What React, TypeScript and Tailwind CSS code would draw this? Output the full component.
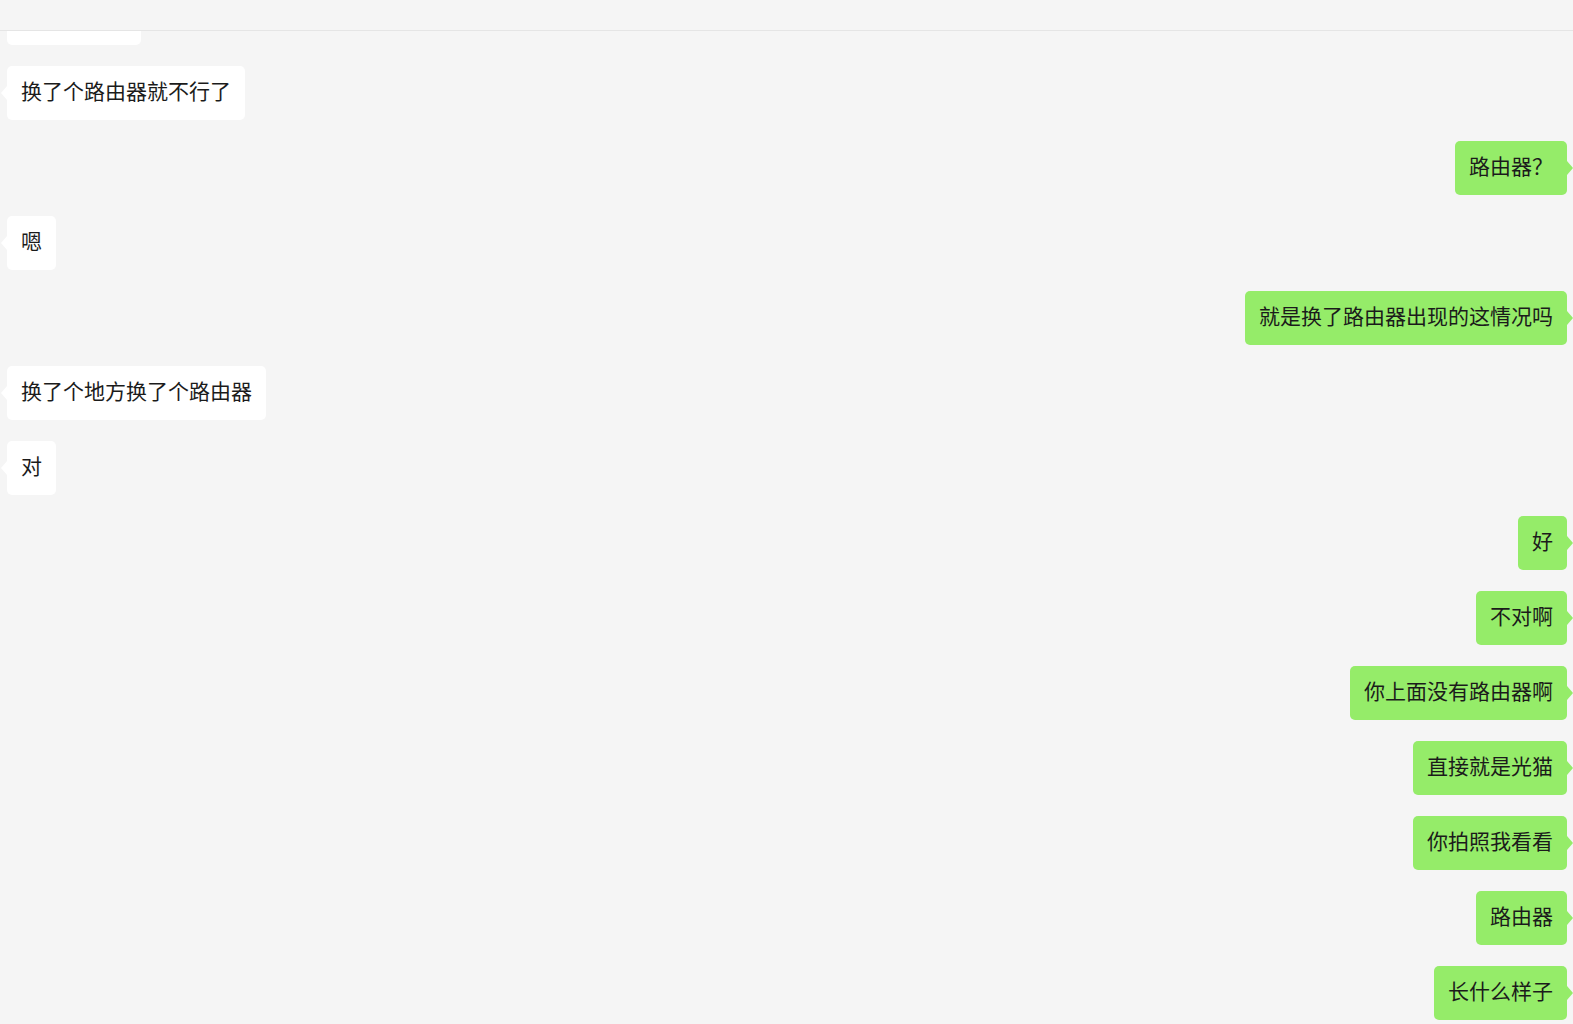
import React from "react";

type Msg = { side: "l" | "r"; text: string; w?: number };

const msgs: Msg[] = [
  { side: "l", text: "", w: 134 },
  { side: "l", text: "换了个路由器就不行了" },
  { side: "r", text: "路由器？" },
  { side: "l", text: "嗯" },
  { side: "r", text: "就是换了路由器出现的这情况吗" },
  { side: "l", text: "换了个地方换了个路由器" },
  { side: "l", text: "对" },
  { side: "r", text: "好" },
  { side: "r", text: "不对啊" },
  { side: "r", text: "你上面没有路由器啊" },
  { side: "r", text: "直接就是光猫" },
  { side: "r", text: "你拍照我看看" },
  { side: "r", text: "路由器" },
  { side: "r", text: "长什么样子" },
];

function Bubble({ m }: { m: Msg }) {
  const left = m.side === "l";
  return (
    <div className={left ? "flex justify-start" : "flex justify-end"}>
      <div
        className={
          "relative h-[54px] rounded-[5px] px-[14px] pt-[12px] pb-[16px] text-[21px] leading-[25px] text-[#1b1b1b] whitespace-nowrap " +
          (left ? "bg-white" : "bg-[#95ec69]")
        }
        style={m.w ? { width: m.w } : undefined}
      >
        {m.text}
        {left ? (
          <span className="absolute left-[-6px] top-1/2 -translate-y-1/2 w-0 h-0 border-y-[7px] border-y-transparent border-r-[6px] border-r-white" />
        ) : (
          <span className="absolute right-[-6px] top-1/2 -translate-y-1/2 w-0 h-0 border-y-[7px] border-y-transparent border-l-[6px] border-l-[#95ec69]" />
        )}
      </div>
    </div>
  );
}

export default function App() {
  return (
    <div
      className="h-screen w-full bg-[#f5f5f5] flex flex-col overflow-hidden"
      style={{ fontFamily: '"Noto Sans CJK SC", "Noto Sans", sans-serif' }}
    >
      <div className="h-[31px] shrink-0 border-b border-[#e5e5e5] bg-[#f5f5f5] relative z-10" />
      <div className="flex-1 overflow-hidden">
        <div className="mt-[-40px] flex flex-col gap-[21px] pl-[7px] pr-[6px]">
          {msgs.map((m, i) => (
            <Bubble key={i} m={m} />
          ))}
        </div>
      </div>
    </div>
  );
}
